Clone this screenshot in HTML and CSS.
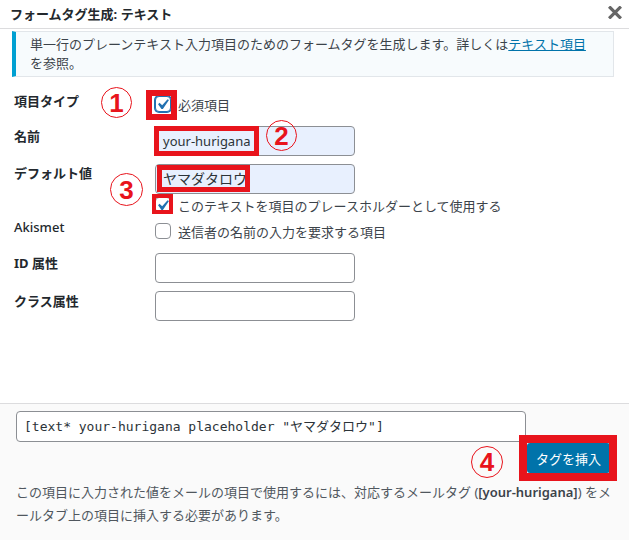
FILE: index.html
```html
<!DOCTYPE html>
<html lang="ja">
<head>
<meta charset="utf-8">
<title>フォームタグ生成: テキスト</title>
<link rel="stylesheet" href="styles.css">
</head>
<body>
<div class="dialog">
  <header class="hd">
    <h1 class="title">フォームタグ生成: テキスト</h1>
    <span class="close"><svg width="14" height="13" viewBox="0 0 14 13"><path d="M2.2 1.7 L11.8 11.3 M11.8 1.7 L2.2 11.3" stroke="#666" stroke-width="3.2" stroke-linecap="square"/></svg></span>
  </header>
  <main class="main">
    <div class="notice">単一行のプレーンテキスト入力項目のためのフォームタグを生成します。詳しくは<a href="#">テキスト項目</a>を参照。</div>
    <div class="form">
      <div class="row r1">
        <div class="lbl">項目タイプ</div>
        <div class="fld"><label class="chk"><span class="cb focus"><svg class="tick" viewBox="0 0 20 20"><path d="M14.83 4.89l1.34.94-5.81 8.38H9.02L5.78 9.67l1.34-1.25 2.57 2.4z"/></svg></span>必須項目</label></div>
      </div>
      <div class="row r2">
        <div class="lbl">名前</div>
        <div class="fld"><div class="inp filled">your-hurigana</div></div>
      </div>
      <div class="row r3">
        <div class="lbl">デフォルト値</div>
        <div class="fld">
          <div class="inp filled jp">ヤマダタロウ</div>
          <label class="chk chk-sub"><span class="cb"><svg class="tick" viewBox="0 0 20 20"><path d="M14.83 4.89l1.34.94-5.81 8.38H9.02L5.78 9.67l1.34-1.25 2.57 2.4z"/></svg></span>このテキストを項目のプレースホルダーとして使用する</label>
        </div>
      </div>
      <div class="row r4">
        <div class="lbl lbl-latin">Akismet</div>
        <div class="fld"><label class="chk"><span class="cb"></span>送信者の名前の入力を要求する項目</label></div>
      </div>
      <div class="row r5">
        <div class="lbl">ID 属性</div>
        <div class="fld"><div class="inp"></div></div>
      </div>
      <div class="row r6">
        <div class="lbl">クラス属性</div>
        <div class="fld"><div class="inp"></div></div>
      </div>
    </div>
  </main>
  <footer class="insert">
    <div class="tag">[text* your-hurigana placeholder "ヤマダタロウ"]</div>
    <div class="actions"><button class="btn" type="button">タグを挿入</button></div>
    <p class="tip">この項目に入力された値をメールの項目で使用するには、対応するメールタグ (<strong>[your-hurigana]</strong>) をメールタブ上の項目に挿入する必要があります。</p>
  </footer>

  <span class="frame f1"></span>
  <span class="frame f2"></span>
  <span class="frame f3"></span>
  <span class="frame f4"></span>
  <span class="frame f5"></span>
  <span class="num n1">1</span>
  <span class="num n2">2</span>
  <span class="num n3">3</span>
  <span class="num n4">4</span>
</div>
</body>
</html>
```

FILE: styles.css
```css
* { box-sizing: border-box; }
html, body { margin: 0; padding: 0; }
body {
  font-family: "Noto Sans", "Noto Sans CJK JP", sans-serif;
  font-size: 13px;
  color: #1d2327;
  background: #fff;
}
.dialog {
  position: relative;
  width: 629px;
  height: 540px;
  display: flex;
  flex-direction: column;
  overflow: hidden;
}
.hd {
  flex: none;
  height: 29px;
  border-bottom: 1px solid #dcdcde;
  display: flex;
  align-items: center;
  justify-content: space-between;
  padding: 0 7px 0 10px;
}
.title {
  margin: 0;
  font-size: 13px;
  font-weight: 700;
  line-height: 28px;
  color: #23282d;
}
.close { display: flex; margin-top: -3px; }

.main { flex: 1; padding: 2px 15px 0 12px; }
.notice {
  border: 1px solid #e2e6ea;
  border-left: 4px solid #00a0d2;
  background: #f7fbfd;
  padding: 3px 24px 3px 14px;
  line-height: 19px;
  color: #3c434a;
}
.notice a { color: #0073aa; text-decoration: underline; }

.form { padding-top: 15px; }
.row { display: flex; }
.lbl {
  flex: none;
  width: 143px;
  padding-left: 2px;
  font-weight: 700;
  line-height: 18px;
  color: #23282d;
}
.lbl-latin { font-weight: 500; }
.fld { flex: 1; display: flex; flex-direction: column; align-items: flex-start; }

.r1 { height: 24px; }
.r1 .fld { justify-content: center; }
.r2 { margin-top: 10px; }
.r2 .lbl { padding-top: 1px; }
.r3 { margin-top: 8px; }
.r4 { margin-top: 3px; }
.r4 .fld { padding-top: 3px; }
.r5 { margin-top: 12px; }
.r5 .lbl { padding-top: 1px; }
.r6 { margin-top: 8px; }
.r6 .lbl { padding-top: 1px; }

.chk {
  display: flex;
  align-items: center;
  gap: 7px;
  height: 20px;
  color: #3c434a;
}
.chk-sub { margin-top: 1px; }
.cb {
  position: relative;
  flex: none;
  width: 16px;
  height: 16px;
  border: 1px solid #8c8f94;
  border-radius: 4px;
  background: #fff;
}
.cb.focus { border-color: #2271b1; box-shadow: 0 0 0 1px #2271b1; }
.tick {
  position: absolute;
  left: -4px;
  top: -3px;
  width: 21px;
  height: 21px;
  fill: #2271b1;
}

.inp {
  width: 200px;
  height: 30px;
  border: 1px solid #8c8f94;
  border-radius: 4px;
  background: #fff;
  padding: 0 7px;
  font-size: 13px;
  line-height: 28px;
  color: #2c3338;
}
.inp.jp { font-size: 14px; }
.inp.filled { background: #e8f0fe; }

.insert {
  flex: none;
  height: 137px;
  border-top: 1px solid #dcdcde;
  background: #fafafa;
  padding: 7px 10px 0 16px;
}
.tag {
  width: 510px;
  height: 31px;
  border: 1px solid #8c8f94;
  border-radius: 4px;
  background: #fff;
  padding: 0 7px;
  font-family: "DejaVu Sans Mono", "Noto Sans CJK JP", monospace;
  font-size: 13px;
  line-height: 29px;
  color: #2c3338;
}
.actions { display: flex; justify-content: flex-end; padding-right: 9px; }
.btn {
  margin-top: 1px;
  width: 83px;
  height: 30px;
  border: 0;
  border-radius: 3px;
  background: #0073aa;
  color: #fff;
  font-family: "Noto Sans", "Noto Sans CJK JP", sans-serif;
  font-size: 13px;
  padding: 0;
}
.tip {
  margin: 8px 0 0;
  line-height: 23px;
  color: #50575e;
}
.tip strong { font-weight: 600; color: #3c434a; }

.frame {
  position: absolute;
  border: 5px solid #e8141c;
  pointer-events: none;
}
.f1 { left: 146px; top: 90px; width: 31px; height: 30px; border-width: 6px; }
.f2 { left: 154px; top: 126px; width: 105px; height: 30px; }
.f3 { left: 157px; top: 165px; width: 93px; height: 27px; }
.f4 { left: 152px; top: 194px; width: 21px; height: 20px; border-width: 4px; }
.f5 { left: 519px; top: 435px; width: 98px; height: 46px; border-width: 8px; }

.num {
  position: absolute;
  width: 31px;
  height: 31px;
  border: 1.5px solid #e8141c;
  border-radius: 50%;
  color: #e8141c;
  font-family: "Liberation Sans", sans-serif;
  font-weight: 700;
  font-size: 26px;
  line-height: 1;
  display: flex;
  align-items: center;
  justify-content: center;
}
.n1 { left: 101px; top: 87px; }
.n2 { left: 266px; top: 120px; }
.n3 { left: 110px; top: 173px; width: 33px; height: 33px; }
.n4 { left: 471px; top: 446px; width: 32px; height: 32px; }
```
